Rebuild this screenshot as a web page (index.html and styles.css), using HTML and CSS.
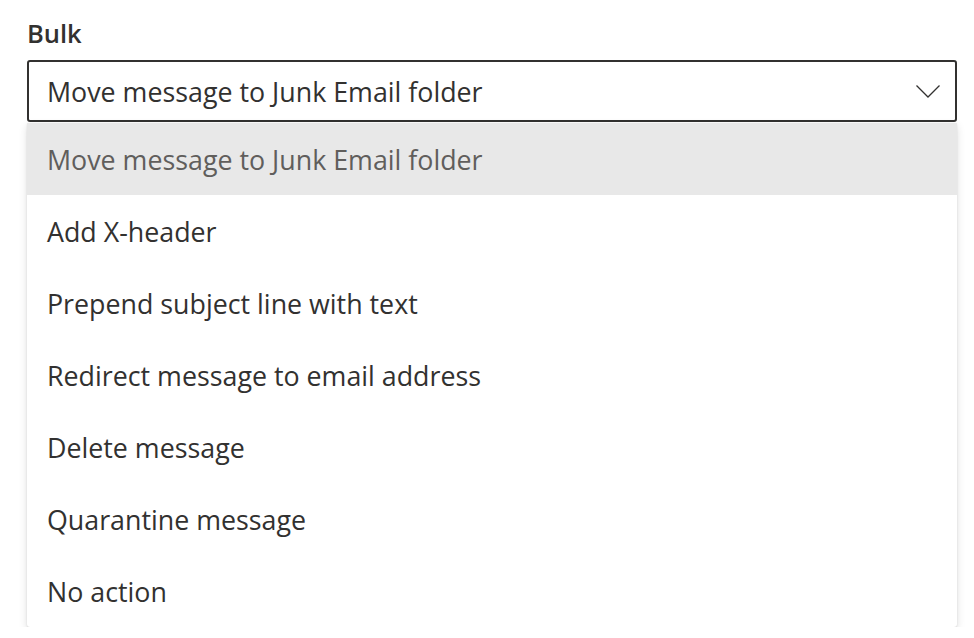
FILE: index.html
```html
<!DOCTYPE html>
<html lang="en">
<head>
    <meta charset="UTF-8">
    <meta name="viewport" content="width=device-width, initial-scale=1.0">
    <title>Bulk action</title>
    <link rel="stylesheet" href="styles.css">
</head>
<body>
    <div class="field">
        <div class="label">Bulk</div>

        <div class="dropdown">
            <span class="dropdown-title">Move message to Junk Email folder</span>
            <svg class="chevron" width="26" height="14" viewBox="0 0 26 14">
                <path d="M1.5 1.5 L13 13 L24.5 1.5" fill="none" stroke="#323130" stroke-width="1.3"/>
            </svg>
        </div>

        <div class="menu">
            <div class="menu-item selected">Move message to Junk Email folder</div>
            <div class="menu-item">Add X-header</div>
            <div class="menu-item">Prepend subject line with text</div>
            <div class="menu-item">Redirect message to email address</div>
            <div class="menu-item">Delete message</div>
            <div class="menu-item">Quarantine message</div>
            <div class="menu-item">No action</div>
        </div>
    </div>
</body>
</html>
```

FILE: styles.css
```css
body {
    font-family: "Open Sans", "Noto Sans", Arial, sans-serif;
    background-color: #fff;
    color: #323130;
    margin: 0;
}

.field {
    width: 930px;
    padding: 14px 0 0 27px;
}

.label {
    font-size: 25.5px;
    font-weight: 600;
    line-height: 38px;
    height: 46px;
}

.dropdown {
    height: 58px;
    border: 2px solid #323130;
    border-radius: 3px;
    display: flex;
    align-items: center;
    justify-content: space-between;
    padding: 0 14px 0 18px;
}

.dropdown-title {
    font-size: 26.8px;
}

.chevron {
    display: block;
}

/* Options list */
.menu {
    background: #fff;
    border-radius: 0 0 3px 3px;
    box-shadow: 0 3px 8px rgba(0, 0, 0, 0.13), 0 1px 2px rgba(0, 0, 0, 0.11);
    margin-top: 1px;
}

.menu-item {
    height: 72px;
    display: flex;
    align-items: center;
    padding-left: 20px;
    font-size: 26.8px;
}

.menu-item.selected {
    background-color: #e8e8e8;
    color: #605e5c;
}
```
